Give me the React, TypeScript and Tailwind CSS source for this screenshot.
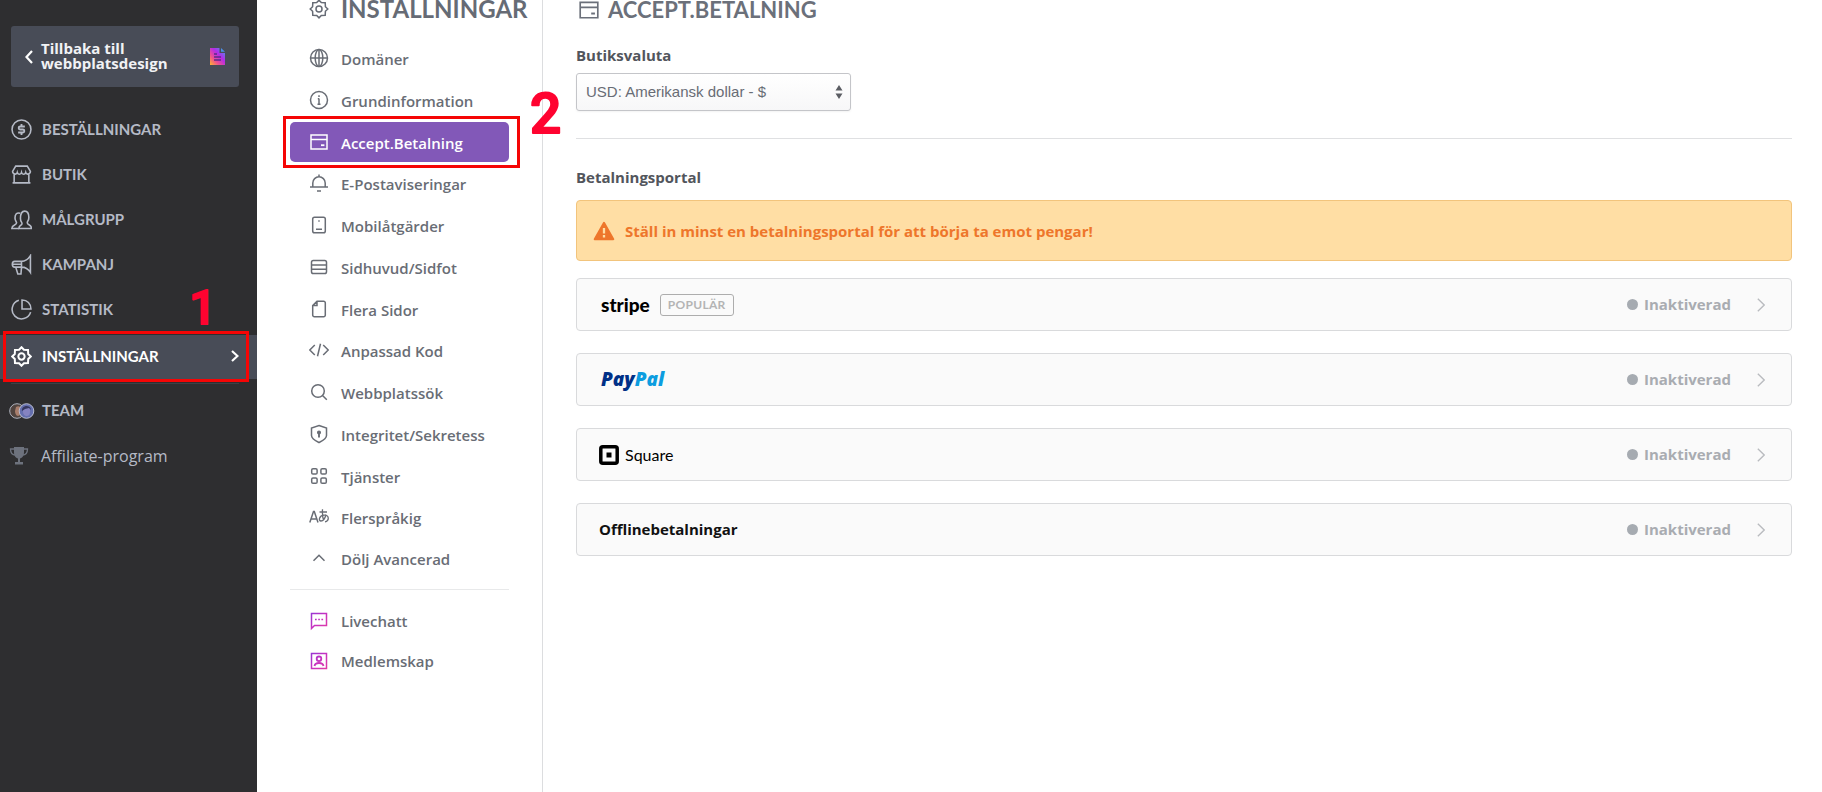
import type { ReactNode } from "react";

type IconProps = { children: ReactNode; size?: string; width?: number };

function Icon({ children, size = "size-5", width = 1.5 }: IconProps) {
  return (
    <svg viewBox="0 0 20 20" className={`${size} shrink-0`} fill="none" stroke="currentColor" strokeWidth={width} aria-hidden="true">
      {children}
    </svg>
  );
}

const gearPath =
  "M10 1.2 L12.3 3.6 L16.2 3.8 L16.4 7.7 L18.8 10 L16.4 12.3 L16.2 16.2 L12.3 16.4 L10 18.8 L7.7 16.4 L3.8 16.2 L3.6 12.3 L1.2 10 L3.6 7.7 L3.8 3.8 L7.7 3.6 Z";

const card = (
  <>
    <path d="M2 3h16v14H2zM2 7.6h16" />
    <path d="M12 13.2h3.4" strokeWidth="1.8" />
  </>
);

const mainItems = [
  {
    label: "BESTÄLLNINGAR",
    icon: (
      <>
        <circle cx="10" cy="10" r="9" />
        <path d="M13.2 7.2H8.700a1.400 1.400 0 0 0 0 2.800h2.600a1.400 1.400 0 0 1 0 2.800H6.800M10 4.800v2.400M10 12.800v2.400" strokeWidth="1.800" />
      </>
    ),
  },
  {
    label: "BUTIK",
    icon: <path d="M4.500 2h11L18.500 7c0 3-3.800 3.500-4.500 1-.7 2.300-3.400 2.300-4 0-.6 2.300-3.300 2.300-4 0-.7 2.500-4.500 2-4.500-1zM3 10v8M17 10v8M1.500 18h17" />,
  },
  {
    label: "MÅLGRUPP",
    icon: (
      <>
        <path d="M7.500 18.500c0-3.500 3-2.500 3-4.800 0-1.200-1.500-1.700-1.500-4.700 0-4 1-7 4-7s4 3 4 6-1.500 3.800-1.500 5c0 2.500 4 1.500 4 5.500z" />
        <path d="M8.800 4C5.500 3 3.800 5 3.800 8.500c0 2.500 1.500 3.500 1.500 4.700C5.300 15.600.8 14.800.8 18.500h6.700" />
      </>
    ),
  },
  {
    label: "KAMPANJ",
    icon: <path d="M18.500 1.500v16C16 13.500 13 12.500 10 12.500H3.500c-3 0-3-5.500 0-5.500H10c3 0 6-1.500 8.500-5.500zM10 7v5.500M1.500 9.800H10M4.500 12.500l2 6.500h3l.5-6.500" />,
  },
  {
    label: "STATISTIK",
    icon: (
      <>
        <path d="M7.500 1.300A9 9 0 1 0 18.700 12.500" />
        <path d="M10.500 1v8.500H19C19 4.500 15.500 1 10.500 1z" />
      </>
    ),
  },
];

const settingsGroups = [
  {
    gap: "gap-0.5",
    items: [
      { label: "Domäner", icon: <><circle cx="10" cy="10" r="8.500" /><ellipse cx="10" cy="10" rx="3.800" ry="8.500" /><path d="M1.500 10h17M10 1.500v17" /></> },
      { label: "Grundinformation", icon: <><circle cx="10" cy="10" r="8.500" /><path d="M10 8.500v6M10 5.200v1.800M8.800 8.800H10M8.500 14.200h3" /></> },
      { label: "Accept.Betalning", icon: card, active: true },
    ],
  },
  {
    gap: "gap-0.5",
    items: [
      { label: "E-Postaviseringar", icon: <path d="M1 14h18M3.800 14V10a6.200 6.200 0 0 1 12.400 0v4M10 3.500V1.500M8 18h4" /> },
      { label: "Mobilåtgärder", icon: <><rect x="3.700" y="2.300" width="12.600" height="15.400" rx="1.800" /><path d="M7 14.300h6M9.300 6h1.400" /></> },
      { label: "Sidhuvud/Sidfot", icon: <><rect x="2.500" y="3.500" width="15" height="13" rx="1.800" /><path d="M2.500 8h15M2.500 12.300h15" /></> },
      { label: "Flera Sidor", icon: <path d="M8 2.300h6.700a1.600 1.600 0 0 1 1.600 1.600v12.200a1.600 1.600 0 0 1-1.600 1.600H5.300a1.600 1.600 0 0 1-1.600-1.600V6.600zM8 2.300v4.300H3.700" /> },
    ],
  },
  {
    gap: "gap-0.5",
    items: [
      { label: "Anpassad Kod", icon: <path d="M5.800 5 .8 10l5 5M14.200 5l5 5-5 5M11.500 3.800l-3 12.400" /> },
      { label: "Webbplatssök", icon: <><circle cx="9" cy="9" r="6.300" /><path d="m13.500 13.500 4.300 4.300" /></> },
      { label: "Integritet/Sekretess", icon: <><path d="M10 1.500 17.500 4v7.500c0 3.500-4.500 5.500-7.500 7-3-1.500-7.500-3.500-7.500-7V4z" /><circle cx="10" cy="8.500" r="1.300" fill="currentColor" /><path d="M10 9v4.500" strokeWidth="1.900" /></> },
      { label: "Tjänster", icon: <><rect x="2.700" y="2.700" width="5.400" height="5.400" rx="1.300" /><rect x="11.900" y="2.700" width="5.400" height="5.400" rx="1.300" /><rect x="2.700" y="11.900" width="5.400" height="5.400" rx="1.300" /><rect x="11.900" y="11.900" width="5.400" height="5.400" rx="1.300" /></> },
    ],
  },
  {
    gap: "gap-px",
    items: [
      { label: "Flerspråkig", icon: <><path d="M.8 15.500 4.500 4.500h.8L9 15.500M2 12h5.800" /><path d="M10.500 5h7.500M13.500 2.200c-.3 5 0 8 1 10.500M17 7.500c-1 4-3 6.500-5 6.500-2.800 0-2-5.500 3-5.800 5.500-.3 5.500 6 1 6.600" strokeWidth="1.300" /></> },
      { label: "Dölj Avancerad", icon: <path d="m4.500 12.800 5.500-5.600 5.500 5.600" /> },
    ],
  },
];

const gateways = [
  {
    id: "stripe",
    brand: (
      <>
        <span className="pl-0.5 font-[Lato,sans-serif] text-[19px] leading-6 font-black text-black">stripe</span>
        <span className="ml-2.5 rounded-[3px] border border-[#adadad] px-[7px] font-[Lato,sans-serif] text-xs leading-5 font-bold tracking-wide text-[#b4b4b4]">POPULÄR</span>
      </>
    ),
  },
  {
    id: "paypal",
    brand: (
      <span className="pl-0.5 font-['Open_Sans',sans-serif] text-[19px] font-extrabold text-[#003087] italic">
        Pay<span className="text-[#0c9de0]">Pal</span>
      </span>
    ),
  },
  {
    id: "square",
    brand: (
      <>
        <svg viewBox="0 0 20 20" className="size-5" aria-hidden="true">
          <rect x="1.800" y="1.800" width="16.400" height="16.400" rx="2" fill="none" stroke="#000" strokeWidth="3.500" />
          <rect x="7.500" y="7.500" width="5" height="5" fill="#000" />
        </svg>
        <span className="pl-1.5 font-[Lato,sans-serif] text-base text-black">Square</span>
      </>
    ),
  },
  { id: "offline", brand: <span className="text-[15px] font-bold text-[#111]">Offlinebetalningar</span> },
];

function Sidebar() {
  return (
    <aside className="w-[257px] shrink-0 bg-[#2e2e30] pt-[26px] font-[Lato,sans-serif] text-[#b5bac6]">
      <button className="mr-[18px] ml-[11px] flex h-[61px] w-[228px] items-center rounded-[3px] bg-[#484c57] px-3.5 text-left">
        <svg viewBox="0 0 8 14" className="h-3.5 w-2" fill="none" stroke="#fff" strokeWidth="2.200" aria-hidden="true">
          <path d="m7 1-5.500 6L7 13" />
        </svg>
        <span className="ml-2 flex-1 pb-0.5 font-['Open_Sans',sans-serif] text-[15px] leading-[15px] font-bold text-[#f1f2f5]">
          Tillbaka till
          <br />
          webbplatsdesign
        </span>
        <svg viewBox="0 0 15 17" className="h-[17px] w-[15px]" aria-hidden="true">
          <defs>
            <linearGradient id="doc" x1="0" y1="1" x2="1" y2="0">
              <stop offset="0" stopColor="#ffb52e" />
              <stop offset=".3" stopColor="#f0508f" />
              <stop offset=".6" stopColor="#b32be8" />
              <stop offset="1" stopColor="#3aa5f0" />
            </linearGradient>
          </defs>
          <path d="M0 0h9.500v5H15v12H0z" fill="url(#doc)" />
          <path d="M11 0l4 3.800h-4z" fill="#4a8fe8" />
          <path d="M4 6h3M4 9h7M4 12h7" stroke="#5b2a8a" strokeWidth="1.300" />
        </svg>
      </button>
      <nav className="mt-5">
        {mainItems.map((item) => (
          <a key={item.label} href="#" className="flex h-[45px] items-center gap-2.5 pl-[11px] text-[15px] font-bold">
            <Icon size="size-[21px]">{item.icon}</Icon>
            {item.label}
          </a>
        ))}
        <div className="relative mt-[3px]">
          <a href="#" aria-current="page" className="flex h-11 items-center gap-2.5 bg-[#484c57] pr-[18px] pb-0.5 pl-[11px] text-[15px] font-bold text-white">
            <Icon size="size-[21px]" width={1.9}>
              <path d={gearPath} />
              <circle cx="10" cy="10" r="3" />
            </Icon>
            <span className="flex-1">INSTÄLLNINGAR</span>
            <svg viewBox="0 0 8 12" className="h-3 w-2" fill="none" stroke="#fff" strokeWidth="2.200" aria-hidden="true">
              <path d="m1 1 5.500 5L1 11" />
            </svg>
          </a>
          <div className="absolute -top-1 left-[3px] h-[51px] w-[246px] border-3 border-[#f50505]" />
          <svg className="absolute -top-14 left-[189px] h-14 w-10 overflow-visible">
            <text x="0" y="45" className="fill-[#ff0330] stroke-[#ff0330] font-[Roboto,sans-serif] text-[48px] font-medium" strokeWidth="2" strokeLinejoin="round">1</text>
          </svg>
        </div>
        <hr className="mr-[18px] ml-[11px] mt-1 border-[#3d4046]" />
        <a href="#" className="mt-1 flex h-[45px] items-center gap-[7px] pl-[9px] text-[15px] font-bold">
          <svg viewBox="0 0 26 16" className="h-4 w-[26px]" aria-hidden="true">
            <circle cx="8" cy="8" r="7.300" fill="#51443f" stroke="#aeb3be" />
            <path d="M7 4c3-2 5 0 5 3s-1 6-3 6-3-3-3-5z" fill="#a87e6c" />
            <circle cx="17.500" cy="8" r="7.300" fill="#656fae" stroke="#b9bdd0" />
            <path d="M14 6c0-4 7-4 7 0v3c0 3-1.500 4-3.500 4S14 11 14 9z" fill="#8583c0" />
            <path d="M13 8c-1-6 9-7 9-1l-2-2-4 1z" fill="#34365f" />
          </svg>
          TEAM
        </a>
        <a href="#" className="flex h-[45px] items-center gap-3 pl-[9px] font-['Open_Sans',sans-serif] text-base">
          <svg viewBox="0 0 20 20" className="size-5 text-[#6d727d]" fill="currentColor" aria-hidden="true">
            <path d="M5 1h10v5c0 4-1.800 6.500-5 6.500S5 10 5 6zM9 12h2v4H9zM6 16h8v2.500H6z" />
            <path d="M5 3H1.500c0 4 1.500 6 5 6M15 3h3.500c0 4-1.500 6-5 6" fill="none" stroke="currentColor" strokeWidth="1.300" />
          </svg>
          Affiliate-program
        </a>
      </nav>
    </aside>
  );
}

function SettingsNav() {
  return (
    <nav className="w-[286px] shrink-0 border-r border-[#dcdddf] text-[15px] font-semibold text-[#696d75]">
      <h2 className="flex h-[18px] items-center gap-3 pl-[52px] font-[Lato,sans-serif] text-2xl leading-4 font-bold text-[#666b75]">
        <Icon size="size-5">
          <path d={gearPath} />
          <circle cx="10" cy="10" r="3" />
        </Icon>
        INSTÄLLNINGAR
      </h2>
      <div className="mx-[33px] mt-5 flex flex-col gap-px">
        {settingsGroups.map((group, i) => (
          <ul key={i} className={`flex flex-col ${group.gap}`}>
            {group.items.map((item) => (
              <li key={item.label} className="relative">
                <a
                  href="#"
                  className={`flex h-10 items-center gap-3 rounded-[5px] pl-[19px] ${"active" in item ? "bg-[#8258b8] text-white" : ""}`}
                >
                  <Icon>{item.icon}</Icon>
                  <span className="pt-0.5">{item.label}</span>
                </a>
                {"active" in item && (
                  <>
                    <div className="absolute -top-1.5 -right-[11px] -bottom-1.5 -left-[7px] border-3 border-[#f50505]" />
                    <svg className="absolute -top-10 left-[240px] h-14 w-10 overflow-visible">
                      <text x="0" y="51" className="fill-[#ff0330] stroke-[#ff0330] font-[Roboto,sans-serif] text-[55px] font-medium" strokeWidth="2" strokeLinejoin="round">2</text>
                    </svg>
                  </>
                )}
              </li>
            ))}
          </ul>
        ))}
      </div>
      <hr className="mx-[33px] mt-[11px] border-[#e8e9ea]" />
      <ul className="mx-[33px] mt-[11px]">
        <li>
          <a href="#" className="flex h-10 items-center gap-3 pl-[19px]">
            <svg viewBox="0 0 20 20" className="size-5" fill="none" stroke="url(#pink)" strokeWidth="1.500" aria-hidden="true">
              <defs>
                <linearGradient id="pink" x1="0" y1="0" x2="20" y2="20" gradientUnits="userSpaceOnUse">
                  <stop offset="0" stopColor="#8a38d8" />
                  <stop offset=".5" stopColor="#c832c0" />
                  <stop offset="1" stopColor="#e83e9c" />
                </linearGradient>
              </defs>
              <path d="M2.500 17.500v-15h15v12h-12z" />
              <path d="M6 8.500h1.700M9.200 8.500h1.700M12.400 8.500h1.700" strokeWidth="1.700" />
            </svg>
            Livechatt
          </a>
        </li>
        <li>
          <a href="#" className="flex h-10 items-center gap-3 pl-[19px]">
            <svg viewBox="0 0 20 20" className="size-5" fill="none" stroke="url(#pink)" strokeWidth="1.500" aria-hidden="true">
              <path d="M2.500 2.500h15v15h-15z" />
              <circle cx="10" cy="7.800" r="2.300" strokeWidth="1.800" />
              <path d="M5.500 15c.8-4 8.200-4 9 0" strokeWidth="1.800" />
            </svg>
            Medlemskap
          </a>
        </li>
      </ul>
    </nav>
  );
}

export default function App() {
  return (
    <div className="flex min-h-screen bg-white font-['Open_Sans',sans-serif]">
      <Sidebar />
      <SettingsNav />
      <main className="min-w-0 flex-1 pr-[30px] pl-[33px]">
        <h1 className="flex h-5 items-center gap-2 pl-0.5 font-[Lato,sans-serif] text-[22px] leading-5 font-bold text-[#6b707a]">
          <Icon size="size-[22px]">{card}</Icon>
          ACCEPT.BETALNING
        </h1>
        <label htmlFor="currency" className="mt-[25px] block text-[15px] leading-5 font-bold text-[#52555c]">
          Butiksvaluta
        </label>
        <div className="relative mt-2 w-[275px]">
          <select
            id="currency"
            className="h-[38px] w-full appearance-none rounded-[3px] border border-[#c4c5c9] bg-linear-to-b from-white to-[#f7f7f8] pl-[9px] font-['Liberation_Sans',sans-serif] text-[15px] text-[#686c75] shadow-xs"
          >
            <option>USD: Amerikansk dollar - $</option>
          </select>
          <svg viewBox="0 0 8 14" className="pointer-events-none absolute top-3 right-2 h-3.5 w-2" fill="#5b5d63" aria-hidden="true">
            <path d="M4 0l3.500 5.500h-7zM4 14L.5 8.500h7z" />
          </svg>
        </div>
        <hr className="mt-[27px] border-[#dfe0e2]" />
        <h3 className="mt-7 text-[15px] leading-5 font-bold text-[#52555c]">Betalningsportal</h3>
        <div role="alert" className="mt-[13px] flex h-[61px] items-center gap-2.5 rounded-[4px] border border-[#f2c47c] bg-[#ffdea4] pl-4 text-[15px] font-bold text-[#ee762b]">
          <svg viewBox="0 0 22 20" className="h-5 w-[22px]" aria-hidden="true">
            <path d="M11 1.800 20.300 18.200H1.700z" fill="currentColor" stroke="currentColor" strokeWidth="2" strokeLinejoin="round" />
            <path d="M11 7v5.500M11 14v2.500" stroke="#ffdea4" strokeWidth="2.300" />
          </svg>
          <span className="pt-0.5">Ställ in minst en betalningsportal för att börja ta emot pengar!</span>
        </div>
        <div className="mt-[17px] flex flex-col gap-[22px]">
          {gateways.map((gateway) => (
            <button key={gateway.id} className="flex h-[53px] w-full items-center rounded-[4px] border border-[#d9dadc] bg-[#fafafa] pr-[26px] pl-[22px] text-left">
              <span className="flex flex-1 items-center">{gateway.brand}</span>
              <span className="size-[11px] rounded-full bg-[#a6abb1]" />
              <span className="ml-1.5 text-[15px] font-bold text-[#a9acb1]">Inaktiverad</span>
              <svg viewBox="0 0 8 14" className="ml-[26px] h-3.5 w-2" fill="none" stroke="#b9bbbf" strokeWidth="1.300" aria-hidden="true">
                <path d="m.8.8 6.400 6.200-6.400 6.200" />
              </svg>
            </button>
          ))}
        </div>
      </main>
    </div>
  );
}
